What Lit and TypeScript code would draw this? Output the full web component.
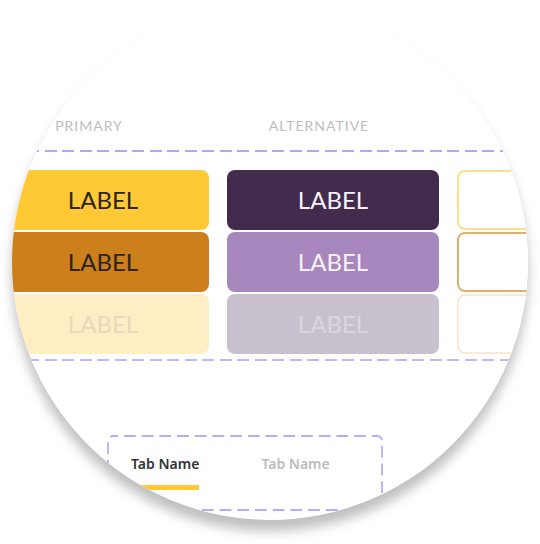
import { LitElement, html, css, svg } from "lit";
import { customElement, property } from "lit/decorators.js";
import { classMap } from "lit/directives/class-map.js";

type State = "normal" | "pressed" | "disabled";
const STATES: State[] = ["normal", "pressed", "disabled"];

@customElement("button-stack")
class ButtonStack extends LitElement {
  @property() variant = "primary";
  @property() label = "";

  static styles = css`
    :host {
      display: grid;
      gap: 2px;
    }
    .btn {
      box-sizing: border-box;
      width: 100%;
      height: 60px;
      padding: 0;
      border: 0;
      border-radius: 8px;
      font: 400 24px/28px Lato, sans-serif;
    }
    .primary { color: #2b2420; }
    .primary.normal { background: #ffc935; }
    .primary.pressed { background: #cc7f1b; }
    .primary.disabled { background: #ffeec3; color: #e6dabb; }
    .alternative { color: #f7f3f8; }
    .alternative.normal { background: #432b4e; }
    .alternative.pressed { background: #a886be; }
    .alternative.disabled { background: #c8c0cc; color: #dbd6de; }
    .outline { background: #fff; border: 2px solid; }
    .outline.normal { border-color: #ffe08a; }
    .outline.pressed { border-color: #e2ae6c; }
    .outline.disabled { border-color: #fbe9d8; }
  `;

  render() {
    return STATES.map(
      (state) => html`<button
        type="button"
        class=${classMap({ btn: true, [this.variant]: true, [state]: true })}
        ?disabled=${state === "disabled"}
        aria-label=${this.label || "Label"}
      >${this.label}</button>`
    );
  }
}

@customElement("tab-strip")
class TabStrip extends LitElement {
  static styles = css`
    :host {
      display: block;
      position: relative;
      box-sizing: border-box;
      width: 276px;
      height: 76px;
      padding: 19px 24px 0;
    }
    .frame {
      position: absolute;
      inset: 0;
      width: 100%;
      height: 100%;
      pointer-events: none;
    }
    .tabs {
      display: flex;
      gap: 62px;
    }
    .tab {
      padding: 0 0 11px;
      border: 0;
      border-bottom: 5px solid transparent;
      background: none;
      color: #bcbcbc;
      font: 600 14px/20px "Noto Sans", sans-serif;
    }
    .tab.active {
      color: #333;
      border-bottom-color: #ffc935;
    }
  `;

  render() {
    return html`
      <svg class="frame" viewBox="0 0 276 76" aria-hidden="true">
        ${svg`<rect x="1" y="1" width="274" height="74" rx="5" fill="none"
          stroke="#b8abfa" stroke-width="1.8" stroke-dasharray="11.8 5.9" stroke-dashoffset="6.7" />`}
      </svg>
      <div class="tabs" role="tablist">
        <button type="button" class="tab active" role="tab" aria-selected="true">Tab Name</button>
        <button type="button" class="tab" role="tab" aria-selected="false">Tab Name</button>
      </div>
    `;
  }
}

@customElement("app-root")
class AppRoot extends LitElement {
  static styles = css`
    :host {
      display: block;
      padding: 4px 12px 24px;
      background: #fff;
    }
    .lens {
      aspect-ratio: 1;
      overflow: hidden;
      border-radius: 50%;
      background: #fff;
      box-shadow: 0 11px 12px rgba(0, 0, 0, 0.25);
    }
    .columns {
      display: grid;
      grid-template-columns: repeat(3, 212px);
      gap: 18px;
      margin-left: -15px;
    }
    .headings {
      padding-top: 112px;
    }
    .heading {
      margin: 0;
      padding-right: 28px;
      color: #bdbdbd;
      font: 400 14px/20px Lato, sans-serif;
      letter-spacing: 1px;
      text-align: center;
    }
    .variants {
      margin-top: 14px;
      padding: 20px 0 7px;
      background:
        repeating-linear-gradient(90deg, #b3a5fc 0 12px, transparent 12px 17px, #b3a5fc 17px 29px, transparent 29px 35px) -2px 0 / 700px 2px repeat-x,
        repeating-linear-gradient(90deg, #c1b6fa 0 12px, transparent 12px 17px, #c1b6fa 17px 29px, transparent 29px 35px) -2px 100% / 700px 2px repeat-x;
    }
    .tab-area {
      margin: 74px 0 0 95px;
    }
  `;

  render() {
    return html`
      <main class="lens">
        <div class="columns headings">
          <h2 class="heading">PRIMARY</h2>
          <h2 class="heading">ALTERNATIVE</h2>
        </div>
        <section class="variants">
          <div class="columns">
            <button-stack variant="primary" label="LABEL"></button-stack>
            <button-stack variant="alternative" label="LABEL"></button-stack>
            <button-stack variant="outline"></button-stack>
          </div>
        </section>
        <tab-strip class="tab-area"></tab-strip>
      </main>
    `;
  }
}
